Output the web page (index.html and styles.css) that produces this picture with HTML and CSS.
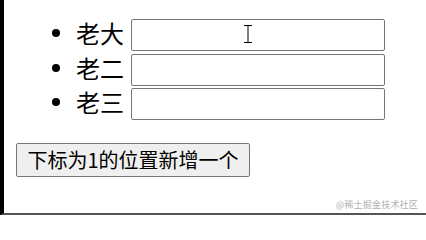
FILE: index.html
```html
<!DOCTYPE html>
<html lang="zh-CN">
<head>
<meta charset="utf-8">
<title>列表</title>
<link rel="stylesheet" href="styles.css">
</head>
<body>
<div class="frame">
  <ul class="list">
    <li class="item"><span class="label">老大</span><span class="field"><input class="input" type="text"><svg class="cursor" width="10" height="18" viewBox="0 0 10 18"><path d="M1 0.5H9M5 0.5V17.5M1 17.5H9" stroke="#000" stroke-width="1" fill="none"/></svg></span></li>
    <li class="item"><span class="label">老二</span><span class="field"><input class="input" type="text"></span></li>
    <li class="item"><span class="label">老三</span><span class="field"><input class="input" type="text"></span></li>
  </ul>
  <button class="btn" type="button">下标为1的位置新增一个</button>
  <div class="watermark">@稀土掘金技术社区</div>
</div>
</body>
</html>
```

FILE: styles.css
```css
html, body {
  margin: 0;
  padding: 0;
  background: #fff;
}

body {
  width: 426px;
  height: 215px;
  overflow: hidden;
  font-family: "Noto Sans CJK SC", "Liberation Sans", sans-serif;
  color: #000;
}

.frame {
  box-sizing: border-box;
  height: 215px;
  border-left: 4px solid #000;
  border-bottom: 2px solid #555;
  display: flex;
  flex-direction: column;
  align-items: flex-start;
}

.list {
  list-style: none;
  margin: 0;
  padding: 18px 0 0 48px;
}

.item {
  display: flex;
  align-items: center;
  height: 34.5px;
}

.item::before {
  content: "";
  width: 8px;
  height: 8px;
  border-radius: 50%;
  background: #000;
  margin-right: 16px;
  margin-top: -4px;
}

.label {
  font-size: 24px;
  line-height: 32px;
  width: 48px;
  margin-right: 7px;
  margin-top: -4px;
}

.field {
  position: relative;
  display: block;
}

.input {
  display: block;
  box-sizing: border-box;
  width: 254px;
  height: 32px;
  margin: 0;
  border: 1px solid #767676;
  border-radius: 2px;
  background: #fff;
  padding: 0 4px;
}

.cursor {
  position: absolute;
  left: 112px;
  top: 6px;
}

.btn {
  margin: 21px 0 0 12px;
  box-sizing: border-box;
  width: 234px;
  height: 34px;
  padding: 0;
  border: 1px solid #767676;
  border-radius: 2px;
  background: #efefef;
  color: #000;
  font-family: "Noto Sans CJK SC", "Liberation Sans", sans-serif;
  font-size: 20px;
  line-height: 30px;
  white-space: nowrap;
}

.watermark {
  margin: auto 0 2px auto;
  padding-right: 8px;
  font-size: 9px;
  line-height: 12px;
  color: #b0b0b0;
  letter-spacing: 0.2px;
}
```
